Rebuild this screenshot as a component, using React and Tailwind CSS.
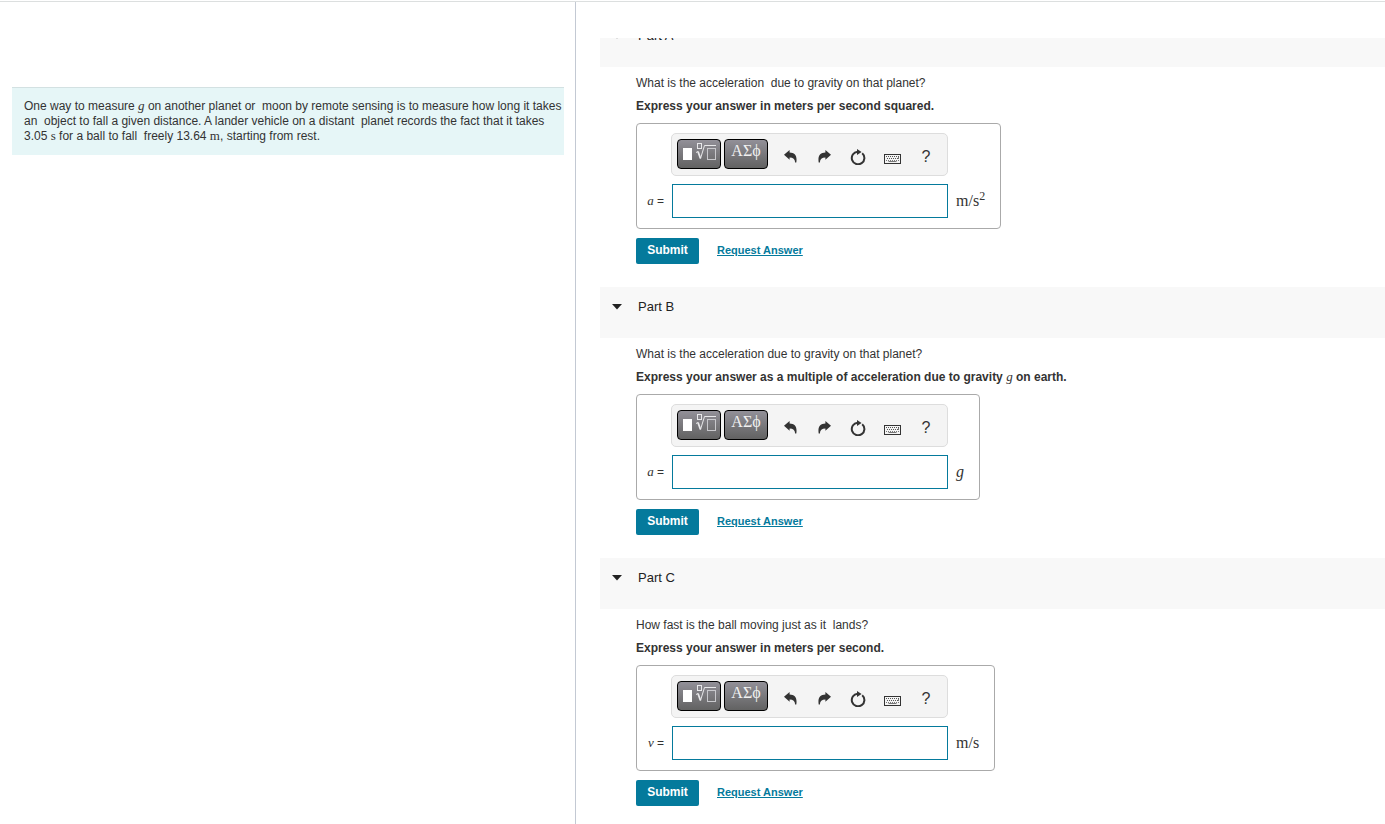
// App.jsx

const parts = [
  {
    id: "a",
    title: "Part A",
    question: <>What is the acceleration &nbsp;due to gravity on that planet?</>,
    hint: "Express your answer in meters per second squared.",
    symbol: "a",
    unit: (
      <>
        m/s<sup className="text-[12px]">2</sup>
      </>
    ),
  },
  {
    id: "b",
    title: "Part B",
    question: "What is the acceleration due to gravity on that planet?",
    hint: (
      <>
        Express your answer as a multiple of acceleration due to gravity <MathVar>g</MathVar> on earth.
      </>
    ),
    symbol: "a",
    unit: <i>g</i>,
  },
  {
    id: "c",
    title: "Part C",
    question: <>How fast is the ball moving just as it &nbsp;lands?</>,
    hint: "Express your answer in meters per second.",
    symbol: "v",
    unit: "m/s",
  },
];

function MathVar({ children }) {
  return (
    <i className="font-['Liberation_Serif',serif] text-[13px] leading-none font-normal">{children}</i>
  );
}

function MathUnit({ children }) {
  return <span className="font-['Liberation_Serif',serif] text-[13px] leading-none">{children}</span>;
}

// Template picker: filled box next to an n-th root
function RootIcon() {
  return (
    <svg width="34" height="20" viewBox="0 0 34 20" fill="none" stroke="#e8e8ea" aria-hidden="true">
      <rect x="1" y="5" width="9" height="12" fill="#fff" stroke="none" />
      <rect x="15.5" y="0.5" width="4" height="5" />
      <path d="M14 9.5l2-1" />
      <path d="M16 8.500l2.500 7" strokeWidth="1.800" />
      <path d="M18.500 15.500L22.500 2.500H34" />
      <rect x="25.500" y="5.500" width="8" height="11" stroke="#c8c8cc" />
    </svg>
  );
}

function UndoIcon() {
  return (
    <svg width="13" height="15" viewBox="0 0 13 15" fill="#333" aria-hidden="true">
      <path d="M0 4.800L5.600 0v2.600C10.800 2.700 13.400 6 12.300 12.400H11.100C11 9 9.200 7.400 5.600 7.400V9.800z" />
    </svg>
  );
}

function RedoIcon() {
  return (
    <svg width="13" height="15" viewBox="0 0 13 15" fill="#333" aria-hidden="true">
      <path d="M13 4.800L7.400 0v2.600C2.200 2.700-.4 6 .7 12.400H1.900C2 9 3.800 7.400 7.400 7.400V9.800z" />
    </svg>
  );
}

function ResetIcon() {
  return (
    <svg width="16" height="16" viewBox="0 0 16 16" fill="none" aria-hidden="true">
      <path d="M12.200 4.200A6.300 6.300 0 1 1 7.600 2.700" stroke="#333" strokeWidth="2" />
      <path d="M7 0l4.600 3L7 6z" fill="#333" />
    </svg>
  );
}

function KeyboardIcon() {
  return (
    <svg width="17" height="11" viewBox="0 0 17 11" fill="none" stroke="#333" aria-hidden="true">
      <rect x="0.5" y="0.5" width="16" height="9" />
      <path d="M2 2.500h13M3 4.500h12" strokeDasharray="1 1" stroke="#555" />
      <path d="M2 6.500h13" strokeDasharray="1 1" stroke="#777" />
      <path d="M4.500 7.500h8M14.500 3v2" stroke="#777" />
    </svg>
  );
}

function DarkButton({ label, children }) {
  return (
    <button
      type="button"
      aria-label={label}
      className="flex h-[30px] w-11 items-start justify-center rounded border border-black bg-linear-to-b from-[#929098] to-[#626262] pt-[3px] text-[#f0f0f0]"
    >
      {children}
    </button>
  );
}

function ToolButton({ label, children }) {
  return (
    <button type="button" aria-label={label} className="flex h-8 w-[34px] items-center justify-center">
      {children}
    </button>
  );
}

function Toolbar() {
  return (
    <div
      role="toolbar"
      className="-ml-px flex h-[43px] items-start rounded-[5px] border border-[#ddd] bg-[#f4f4f4] px-[5px] pt-[5px]"
    >
      <div className="mr-[5px] flex gap-[3px]">
        <DarkButton label="Templates">
          <RootIcon />
        </DarkButton>
        <DarkButton label="Symbols">
          <span className="font-['Liberation_Serif',serif] text-[16px] leading-4">ΑΣϕ</span>
        </DarkButton>
      </div>
      <div className="flex pt-[2px]">
        <ToolButton label="Undo">
          <UndoIcon />
        </ToolButton>
        <ToolButton label="Redo">
          <RedoIcon />
        </ToolButton>
        <ToolButton label="Reset">
          <ResetIcon />
        </ToolButton>
        <div className="pt-[2px]">
          <ToolButton label="Keyboard shortcuts">
            <KeyboardIcon />
          </ToolButton>
        </div>
        <ToolButton label="Help">
          <span className="text-[16px] leading-4 text-[#333]">?</span>
        </ToolButton>
      </div>
    </div>
  );
}

function Part({ part }) {
  const inputId = `answer-${part.id}`;

  return (
    <section className="pb-[23px]">
      <header className="h-[51px] bg-[#f8f8f8] pt-3">
        <button type="button" className="flex items-center pl-3 text-[13px] leading-4 text-[#222]">
          <svg width="10" height="6" viewBox="0 0 10 6" fill="#222" className="mr-4" aria-hidden="true">
            <path d="M0 0h10L5 5.500z" />
          </svg>
          <h2>{part.title}</h2>
        </button>
      </header>

      <div className="pt-2 pl-9 text-[12px] leading-4 text-[#333]">
        <p>{part.question}</p>
        <p className="mt-[7px] font-bold">{part.hint}</p>

        <div className="mt-[9px] grid w-fit grid-cols-[35px_276px_auto] gap-y-2 rounded border border-[#aaa] pt-[9px] pr-[15px] pb-[10px]">
          <div className="col-start-2">
            <Toolbar />
          </div>
          <label htmlFor={inputId} className="col-start-1 self-center pr-2 text-right whitespace-nowrap">
            <MathVar>{part.symbol}</MathVar> =
          </label>
          <input
            id={inputId}
            type="text"
            className="h-[34px] w-full border border-[#047a9c] bg-white px-2 text-[14px] outline-none"
          />
          <span className="self-center pl-2 font-['Liberation_Serif',serif] text-[16px] leading-4">
            {part.unit}
          </span>
        </div>

        <div className="mt-[9px] flex items-start gap-[18px]">
          <button
            type="button"
            className="h-[26px] w-[63px] rounded-[2px] bg-[#047a9c] pb-[2px] text-[12px] font-bold text-white"
          >
            Submit
          </button>
          <a href="#request" className="pt-1 text-[11px] font-bold text-[#047a9c] underline">
            Request Answer
          </a>
        </div>
      </div>
    </section>
  );
}

export default function App() {
  return (
    <div className="flex h-screen flex-col overflow-hidden bg-white pt-px font-['Liberation_Sans',Arial,sans-serif]">
      <main className="flex min-h-0 flex-1 border-t border-[#dcdfdf]">
        <aside className="w-xl shrink-0 border-r border-[#c3c9d3] pt-[85px] pr-[11px] pl-3">
          <p className="border-t border-[#d3e1e2] bg-[#e6f6f7] py-[11px] pl-3 text-[12px] leading-[15px] text-[#333]">
            One way to measure <MathVar>g</MathVar> on another planet or &nbsp;moon by remote sensing is to
            measure how long it takes an &nbsp;object to fall a given distance. A lander vehicle on a distant
            &nbsp;planet records the fact that it takes 3.05 <MathUnit>s</MathUnit> for a ball to fall
            &nbsp;freely 13.64 <MathUnit>m</MathUnit>, starting from rest.
          </p>
        </aside>

        <div className="flex min-w-0 flex-1 flex-col pt-9 pl-6">
          <div className="min-h-0 flex-1 overflow-hidden">
            <div className="-mt-[22px]">
              {parts.map((part) => (
                <Part key={part.id} part={part} />
              ))}
            </div>
          </div>
        </div>
      </main>
    </div>
  );
}
